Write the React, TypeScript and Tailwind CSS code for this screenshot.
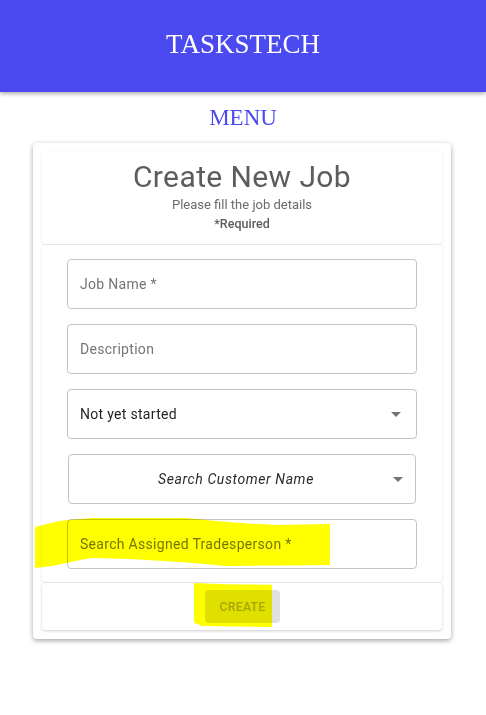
import React from 'react';

const roboto = { fontFamily: 'Roboto, "Liberation Sans", sans-serif' };

function Caret() {
  return (
    <svg width="10" height="5" viewBox="0 0 10 5" className="shrink-0">
      <path d="M0 0 L10 0 L5 5 Z" fill="#757575" />
    </svg>
  );
}

function Field({ label }: { label: string }) {
  return (
    <div className="h-[50px] rounded border border-[#c4c4c4] flex items-center px-[12px]">
      <span className="text-[14px] tracking-[0.3px] text-[#757575]">{label}</span>
    </div>
  );
}

export default function App() {
  return (
    <div className="min-h-[715px] bg-white" style={roboto}>
      <header className="h-[92px] bg-[#4b4af0] flex items-center justify-center pb-[3px] shadow-[0_2px_4px_rgba(0,0,0,0.3)] relative z-10">
        <h1 className="text-white text-[27px] leading-none" style={{ fontFamily: '"Liberation Serif", serif' }}>
          TASKSTECH
        </h1>
      </header>

      <div className="text-center text-[#4b4af0] text-[23px] leading-none mt-[14px]" style={{ fontFamily: '"Liberation Serif", serif' }}>
        MENU
      </div>

      <div className="mx-[33px] mt-[14px] w-[418px] rounded bg-white p-[9px] shadow-[0_2px_4px_rgba(0,0,0,0.25),0_1px_6px_rgba(0,0,0,0.12)]">
        <section className="rounded bg-white shadow-[0_1px_3px_rgba(0,0,0,0.12)] h-[92px] flex flex-col items-center pt-[7px]">
          <h2 className="text-[30px] leading-[36px] tracking-[0.4px] text-[#5c5c5c]">Create New Job</h2>
          <p className="mt-[2px] text-[13px] leading-[16px] text-[#6b6b6b]">Please fill the job details</p>
          <p className="text-[12.5px] leading-[16px] mt-[3px] font-medium text-[#5c5c5c]">*Required</p>
        </section>

        <section className="mt-px rounded bg-white shadow-[0_1px_3px_rgba(0,0,0,0.12)] px-[25px] pt-[14px] pb-[13px] flex flex-col gap-[15px] relative">
          <Field label="Job Name *" />
          <Field label="Description" />
          <div className="h-[50px] rounded border border-[#c4c4c4] flex items-center pl-[12px] pr-[15px]">
            <span className="flex-1 text-[14px] tracking-[0.3px] text-[#1f1f1f]">Not yet started</span>
            <Caret />
          </div>
          <div className="mx-px h-[50px] rounded border border-[#c4c4c4] flex items-center pr-[12px]">
            <span className="flex-1 text-center pl-[10px] text-[14px] tracking-[0.6px] italic text-[#2a2a2a]">Search Customer Name</span>
            <Caret />
          </div>
          <Field label="Search Assigned Tradesperson *" />
          <svg
            className="absolute left-[-7px] top-[273px] mix-blend-multiply pointer-events-none"
            width="300"
            height="52"
            viewBox="0 0 300 52"
          >
            <path
              d="M0 9 C12 6 22 3 33 2 L57 0 L150 0 C170 2 200 5 240 7 L295 6 L295 47 L190 48 C150 44 110 41 57 40 C40 42 25 48 0 50 Z"
              fill="#ffff00"
            />
          </svg>
        </section>

        <section className="mt-px rounded bg-white shadow-[0_1px_3px_rgba(0,0,0,0.2)] h-[47px] flex items-center justify-center relative">
          <button className="ml-[1px] w-[75px] h-[33px] rounded bg-[#e0e0e0] text-[12px] font-medium text-[#a6a6a6] tracking-[0.4px]">
            CREATE
          </button>
          <span className="absolute left-[152px] top-0 w-[78px] h-[44px] bg-[#ffff00] mix-blend-multiply [clip-path:polygon(0_0,40%_3%,100%_4%,100%_100%,10%_98%,0_90%)]" />
        </section>
      </div>
    </div>
  );
}
